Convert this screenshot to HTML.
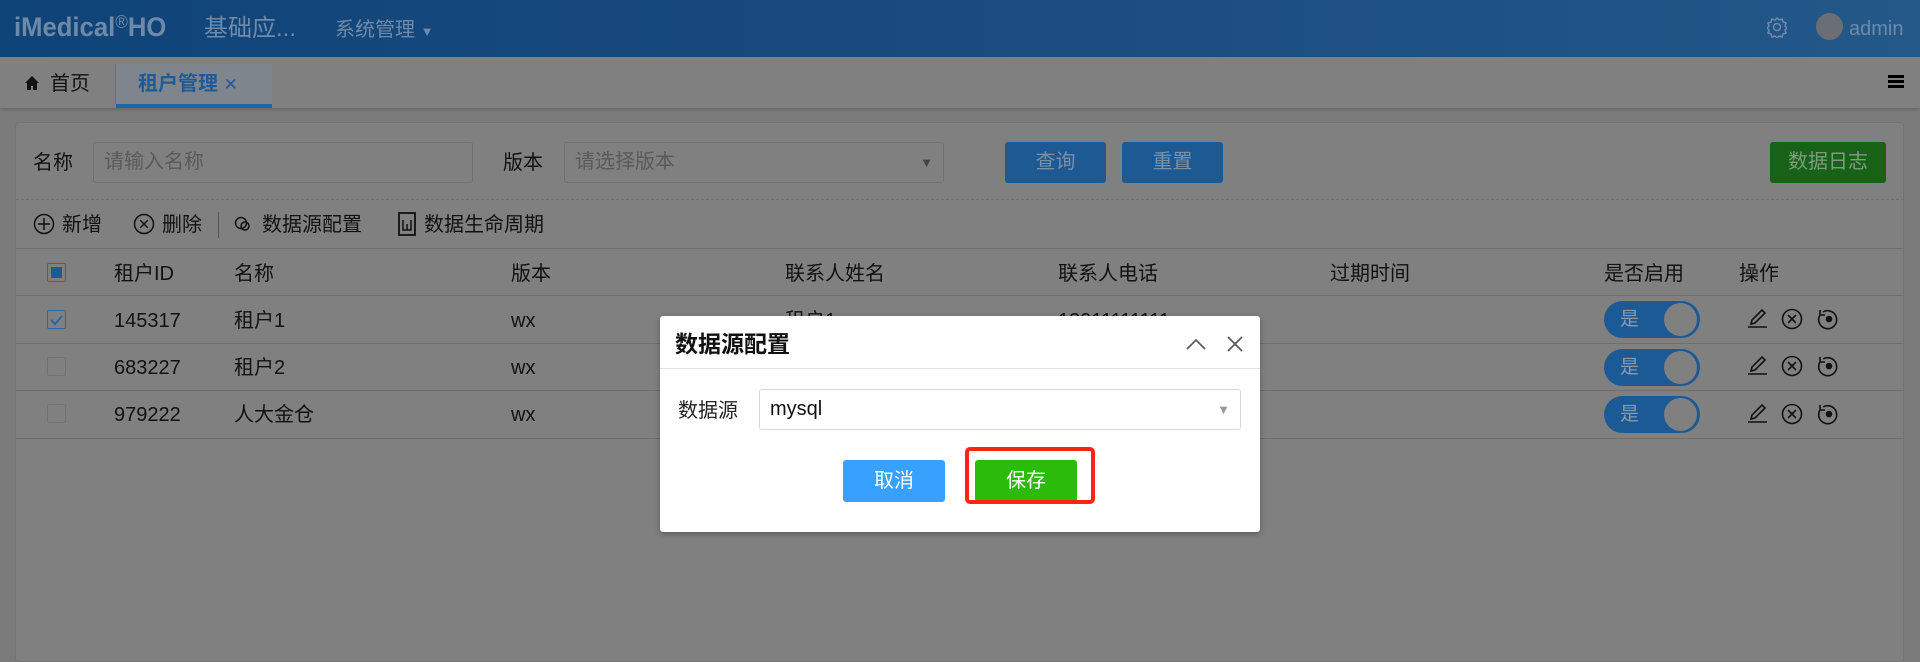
<!DOCTYPE html>
<html><head><meta charset="utf-8"><style>
*{box-sizing:border-box;margin:0;padding:0}
body{width:1920px;height:646px;overflow:hidden;background:#7b7b7b;font-family:"Liberation Sans","Noto Sans CJK SC",sans-serif;color:#111;position:relative}
.a{position:absolute;white-space:nowrap;line-height:24px}
.hdr{left:0;top:0;width:1920px;height:57px;background:linear-gradient(90deg,#0f4478,#1a4b7f 50%,#235889)}
.tabs{left:0;top:57px;width:1920px;height:51px;background:#808080;box-shadow:0 2px 3px rgba(0,0,0,.15)}
.panel{left:15px;top:122px;width:1889px;height:540px;background:#808080;border:1px solid #747474;border-radius:4px}
.inp{height:41px;border:1px solid #6f6f6f;border-radius:3px;background:#808080;color:#5a5a5a;font-size:20px;line-height:39px !important;padding-left:10px}
.btn{height:41px;border-radius:3px;color:#7c8fa3;font-size:20px;line-height:41px !important;text-align:center}
.t20{font-size:20px}
.line{height:1px;background:#6e6e6e;left:16px;width:1888px}
.cb{width:19px;height:19px;border:1px solid #727272;border-radius:2px}
.sw{width:96px;height:37px;border-radius:19px;background:#1c5a96}
.sw i{position:absolute;right:3px;top:2px;width:33px;height:33px;border-radius:50%;background:#808080}
.sw b{position:absolute;left:16px;top:7px;font-weight:normal;font-size:19px;color:#8a9aab}
</style></head><body>
<div class="a hdr"></div>
<div class="a" style="left:14px;top:15px;font-size:27px;font-weight:bold;color:#6f89a8;letter-spacing:0px;transform:scaleX(0.95);transform-origin:left">iMedical<span style="font-size:18px;font-weight:normal;position:relative;top:-8px">®</span>HO</div>
<div class="a" style="left:204px;top:17px;font-size:24px;color:#6f89a8">基础应...</div>
<div class="a" style="left:335px;top:18px;font-size:20px;color:#6f89a8">系统管理 <span style="font-size:13px">▼</span></div>
<svg class="a" style="left:1767px;top:16px" width="20" height="22" viewBox="0 0 20 22"><path d="M10 2l2 2 3-1 1 3 3 1-1 3 2 2-2 2 1 3-3 1-1 3-3-1-2 2-2-2-3 1-1-3-3-1 1-3-2-2 2-2-1-3 3-1 1-3 3 1z" fill="none" stroke="#6f89a8" stroke-width="1.5"/><circle cx="10" cy="11" r="3.5" fill="none" stroke="#6f89a8" stroke-width="1.5"/></svg>
<div class="a" style="left:1816px;top:13px;width:27px;height:27px;border-radius:50%;background:#6b6f75"></div>
<div class="a" style="left:1849px;top:17px;font-size:20px;color:#6f89a8">admin</div>

<div class="a tabs"></div>
<svg class="a" style="left:24px;top:75px" width="16" height="16" viewBox="0 0 16 16"><path d="M8 1L1 8h2v7h4v-4h2v4h4V8h2z" fill="#111"/></svg>
<div class="a t20" style="left:50px;top:72px">首页</div>
<div class="a" style="left:115px;top:64px;width:1px;height:40px;background:#6f6f6f"></div>
<div class="a" style="left:116px;top:64px;width:156px;height:44px;background:#7f858c"></div>
<div class="a" style="left:116px;top:104px;width:156px;height:4px;background:#1d63a8"></div>
<div class="a" style="left:138px;top:72px;font-size:20px;font-weight:bold;color:#1f5a99">租户管理 <span style="font-weight:normal;font-size:17px">✕</span></div>
<div class="a" style="left:1888px;top:75px;width:16px;height:3px;background:#000;box-shadow:0 5px 0 #000,0 10px 0 #000"></div>

<div class="a panel"></div>
<div class="a t20" style="left:33px;top:151px">名称</div>
<div class="a inp" style="left:93px;top:142px;width:380px">请输入名称</div>
<div class="a t20" style="left:503px;top:151px">版本</div>
<div class="a inp" style="left:564px;top:142px;width:380px">请选择版本<span style="position:absolute;right:10px;font-size:13px;color:#444">▼</span></div>
<div class="a btn" style="left:1005px;top:142px;width:101px;background:#1d5a94">查询</div>
<div class="a btn" style="left:1122px;top:142px;width:101px;background:#1d5a94">重置</div>
<div class="a btn" style="left:1770px;top:142px;width:116px;background:#176217;color:#7f9a7f">数据日志</div>
<div class="a" style="left:16px;top:199px;width:1888px;border-top:1px dashed #6f6f6f"></div>

<svg class="a" style="left:33px;top:213px" width="22" height="22"><circle cx="11" cy="11" r="9.5" fill="none" stroke="#111" stroke-width="1.5"/><path d="M11 5v12M5 11h12" stroke="#111" stroke-width="1.5"/></svg>
<div class="a t20" style="left:62px;top:213px">新增</div>
<svg class="a" style="left:133px;top:213px" width="22" height="22"><circle cx="11" cy="11" r="9.5" fill="none" stroke="#111" stroke-width="1.5"/><path d="M7 7l8 8M15 7l-8 8" stroke="#111" stroke-width="1.5"/></svg>
<div class="a t20" style="left:162px;top:213px">删除</div>
<div class="a" style="left:218px;top:212px;width:1px;height:26px;background:#555"></div>
<svg class="a" style="left:234px;top:215px" width="18" height="18"><circle cx="7" cy="8" r="5.5" fill="none" stroke="#111" stroke-width="1.5"/><circle cx="11" cy="11" r="4" fill="none" stroke="#111" stroke-width="1.5"/></svg>
<div class="a t20" style="left:262px;top:213px">数据源配置</div>
<svg class="a" style="left:398px;top:212px" width="18" height="24"><rect x="1" y="1" width="16" height="22" fill="none" stroke="#111" stroke-width="1.8"/><path d="M5 8v10h8V8M9 12v6" stroke="#111" stroke-width="1.5" fill="none"/></svg>
<div class="a t20" style="left:424px;top:213px">数据生命周期</div>

<div class="a line" style="top:248px"></div>
<div class="a line" style="top:295px"></div>
<div class="a line" style="top:343px"></div>
<div class="a line" style="top:390px"></div>
<div class="a line" style="top:438px"></div>

<div class="a cb" style="left:47px;top:263px;border-color:#2a66a3"><div style="position:absolute;left:3px;top:3px;width:11px;height:11px;background:#1d5a94"></div></div>
<div class="a t20" style="left:114px;top:262px">租户ID</div>
<div class="a t20" style="left:234px;top:262px">名称</div>
<div class="a t20" style="left:511px;top:262px">版本</div>
<div class="a t20" style="left:785px;top:262px">联系人姓名</div>
<div class="a t20" style="left:1058px;top:262px">联系人电话</div>
<div class="a t20" style="left:1330px;top:262px">过期时间</div>
<div class="a t20" style="left:1604px;top:262px">是否启用</div>
<div class="a t20" style="left:1739px;top:262px">操作</div>

<div class="a cb" style="left:47px;top:310px;border-color:#2a66a3"><svg width="17" height="17" style="position:absolute;left:0;top:0"><path d="M3 9l4 4 7-8" fill="none" stroke="#2a66a3" stroke-width="2"/></svg></div>
<div class="a t20" style="left:114px;top:309px">145317</div>
<div class="a t20" style="left:234px;top:309px">租户1</div>
<div class="a t20" style="left:511px;top:309px">wx</div>
<div class="a t20" style="left:785px;top:309px">租户1</div>
<div class="a t20" style="left:1058px;top:309px">13911111111</div>
<div class="a cb" style="left:47px;top:357px"></div>
<div class="a t20" style="left:114px;top:356px">683227</div>
<div class="a t20" style="left:234px;top:356px">租户2</div>
<div class="a t20" style="left:511px;top:356px">wx</div>
<div class="a cb" style="left:47px;top:404px"></div>
<div class="a t20" style="left:114px;top:403px">979222</div>
<div class="a t20" style="left:234px;top:403px">人大金仓</div>
<div class="a t20" style="left:511px;top:403px">wx</div>

<div class="a sw" style="left:1604px;top:301px"><b>是</b><i></i></div>
<div class="a sw" style="left:1604px;top:349px"><b>是</b><i></i></div>
<div class="a sw" style="left:1604px;top:396px"><b>是</b><i></i></div>
<svg class="a" style="left:1745px;top:306px" width="110" height="130">
<g id="ic" fill="none" stroke="#111" stroke-width="1.6">
<path d="M3 21h19M6 18l1-4 10-10 3 3-10 10z"/>
<circle cx="47" cy="13" r="9.5"/><path d="M43 9l8 8M51 9l-8 8"/>
<path d="M78 6a9 9 0 1 1-3 3M75 4v5h5"/><circle cx="84" cy="13" r="2.5" fill="#111"/>
</g>
<use href="#ic" y="47"/><use href="#ic" y="95"/>
</svg>

<div class="a" style="left:660px;top:316px;width:600px;height:216px;background:#fff;border-radius:3px;box-shadow:0 2px 6px rgba(0,0,0,.3)"></div>
<div class="a" style="left:660px;top:368px;width:600px;height:1px;background:#e3e3e3"></div>
<div class="a" style="left:675px;top:332px;font-size:23px;font-weight:bold;color:#111">数据源配置</div>
<svg class="a" style="left:1186px;top:334px" width="60" height="20"><path d="M1 15l9-9 9 9" fill="none" stroke="#555" stroke-width="1.6"/><path d="M42 3l14 14M56 3l-14 14" stroke="#555" stroke-width="1.6"/></svg>
<div class="a t20" style="left:678px;top:399px;color:#222">数据源</div>
<div class="a" style="left:759px;top:389px;width:482px;height:41px;border:1px solid #d8d8d8;border-radius:3px;font-size:20px;line-height:39px;padding-left:10px;color:#111">mysql<span style="position:absolute;right:10px;font-size:13px;color:#999">▼</span></div>
<div class="a" style="left:843px;top:460px;width:102px;height:42px;background:#38a0fd;border-radius:3px;color:#fff;font-size:20px;line-height:42px;text-align:center">取消</div>
<div class="a" style="left:975px;top:460px;width:102px;height:42px;background:#2bbb0a;border-radius:3px;color:#fff;font-size:20px;line-height:42px;text-align:center">保存</div>
<div class="a" style="left:965px;top:447px;width:130px;height:57px;border:4px solid #ff2416;border-radius:5px"></div>
</body></html>
